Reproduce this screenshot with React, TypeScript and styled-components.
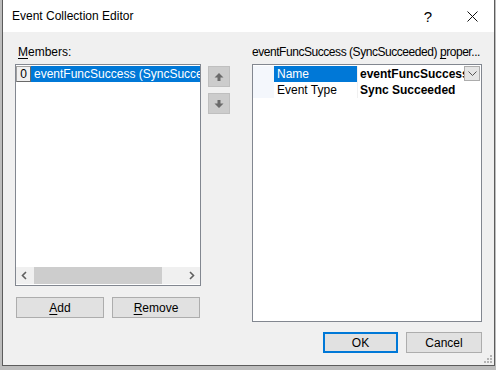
import React from "react";
import styled, { createGlobalStyle, css } from "styled-components";

const GlobalStyle = createGlobalStyle`
  html, body {
    margin: 0;
    padding: 0;
    background: #bdbdbd;
  }
  body {
    font-family: "Liberation Sans", Arial, sans-serif;
    font-size: 12px;
    color: #000;
  }
`;

const Screen = styled.div`
  width: 496px;
  height: 370px;
  overflow: hidden;
  background: #bdbdbd;
`;

const Window = styled.div`
  position: relative;
  margin-left: 2px;
  width: 491px;
  height: 365px;
  border: 1px solid #5c5c5c;
  border-top: none;
  display: flex;
  flex-direction: column;
  background: #f0f0f0;
`;

const TitleBar = styled.div`
  height: 32px;
  background: #ffffff;
  display: flex;
  align-items: center;
  padding-left: 9px;
`;

const Title = styled.span`
  flex: 1;
  font-size: 12px;
`;

const TitleButton = styled.div`
  width: 44px;
  height: 32px;
  display: flex;
  align-items: center;
  justify-content: center;
  font-size: 15px;
`;

const Body = styled.div`
  flex: 1;
  display: flex;
  gap: 22px;
  padding-left: 12px;
`;

const Pane = styled.div<{ $width: number }>`
  width: ${(p) => p.$width}px;
  display: flex;
  flex-direction: column;
`;

const Label = styled.div<{ $indent?: number; $tight?: boolean }>`
  height: 32px;
  box-sizing: border-box;
  padding-top: 13px;
  padding-left: ${(p) => p.$indent ?? 0}px;
  white-space: nowrap;
  letter-spacing: ${(p) => (p.$tight ? "-0.45px" : "normal")};
`;

const Mnemonic = styled.span`
  text-decoration: underline;
  text-underline-offset: 2px;
`;

const ListRow = styled.div`
  display: flex;
  gap: 7px;
`;

const ListBox = styled.div`
  position: relative;
  width: 186px;
  height: 222px;
  box-sizing: border-box;
  border: 1px solid #828790;
  background: #ffffff;
  display: flex;
  flex-direction: column;
`;

const ListItems = styled.div`
  flex: 1;
  padding-top: 1px;
`;

const ListItem = styled.div`
  display: flex;
  height: 16px;
`;

const IndexBox = styled.div`
  width: 15px;
  box-sizing: border-box;
  border: 1px solid #a0a0a0;
  border-right-color: #696969;
  border-bottom-color: #696969;
  background: #f0f0f0;
  display: flex;
  align-items: center;
  justify-content: center;
  font-size: 12px;
  line-height: 1;
`;

const ItemText = styled.div<{ $selected?: boolean }>`
  flex: 1;
  overflow: hidden;
  white-space: nowrap;
  padding-left: 3px;
  line-height: 16px;
  ${(p) =>
    p.$selected &&
    css`
      background: #0078d7;
      color: #ffffff;
    `}
`;

const HScroll = styled.div`
  height: 17px;
  margin-bottom: 1px;
  display: flex;
  background: #f0f0f0;
`;

const ScrollArrow = styled.div`
  width: 17px;
  display: flex;
  align-items: center;
  justify-content: center;
`;

const ScrollTrack = styled.div`
  flex: 1;
  padding: 0 1px;
  display: flex;
`;

const ScrollThumb = styled.div`
  width: 128px;
  background: #cdcdcd;
`;

const MoveButtons = styled.div`
  display: flex;
  flex-direction: column;
  gap: 6px;
  padding-top: 2px;
`;

const MoveButton = styled.div`
  width: 22px;
  height: 21px;
  box-sizing: border-box;
  background: #cccccc;
  border: 1px solid #bfbfbf;
  display: flex;
  align-items: center;
  justify-content: center;
`;

const ButtonRow = styled.div<{ $end?: boolean; $top: number; $left?: number }>`
  display: flex;
  gap: 8px;
  margin-top: ${(p) => p.$top}px;
  padding-left: ${(p) => p.$left ?? 0}px;
  justify-content: ${(p) => (p.$end ? "flex-end" : "flex-start")};
`;

const PushButton = styled.div<{ $width: number; $default?: boolean }>`
  width: ${(p) => p.$width}px;
  height: 21px;
  box-sizing: border-box;
  background: #e1e1e1;
  border: 1px solid #adadad;
  display: flex;
  align-items: center;
  justify-content: center;
  ${(p) =>
    p.$default &&
    css`
      border: 2px solid #0078d7;
    `}
`;

const Grid = styled.div`
  width: 230px;
  height: 258px;
  box-sizing: border-box;
  border: 1px solid #828790;
  background: #ffffff;
  padding-top: 1px;
`;

const GridRow = styled.div`
  display: flex;
  height: 16px;
`;

const Gutter = styled.div`
  width: 21px;
  background: #f4f7fc;
`;

const NameCell = styled.div<{ $selected?: boolean }>`
  width: 84px;
  padding-left: 3px;
  box-sizing: border-box;
  line-height: 16px;
  white-space: nowrap;
  border-right: 1px solid #f0f0f0;
  ${(p) =>
    p.$selected &&
    css`
      background: #0078d7;
      color: #ffffff;
    `}
`;

const ValueCell = styled.div`
  flex: 1;
  display: flex;
  min-width: 0;
  padding-left: 2px;
  font-weight: bold;
  line-height: 16px;
`;

const ValueText = styled.span`
  flex: 1;
  overflow: hidden;
  white-space: nowrap;
`;

const DropButton = styled.div`
  width: 16px;
  height: 15px;
  box-sizing: border-box;
  margin-right: 1px;
  background: #e5e5e5;
  border: 1px solid #acacac;
  display: flex;
  align-items: center;
  justify-content: center;
`;

const Grip = styled.svg`
  position: absolute;
  right: 2px;
  bottom: 2px;
`;

const ArrowUp = () => (
  <svg width="10" height="10" viewBox="0 0 10 10">
    <path d="M5 1 L9.5 5.5 H6.5 V9 H3.5 V5.5 H0.5 Z" fill="#6b6b6b" />
  </svg>
);

const ArrowDown = () => (
  <svg width="10" height="10" viewBox="0 0 10 10">
    <path d="M5 9 L9.5 4.5 H6.5 V1 H3.5 V4.5 H0.5 Z" fill="#6b6b6b" />
  </svg>
);

const Chevron = ({ dir }: { dir: "left" | "right" }) => (
  <svg width="7" height="9" viewBox="0 0 7 9">
    <polyline
      points={dir === "left" ? "5,1 1.5,4.5 5,8" : "2,1 5.5,4.5 2,8"}
      fill="none"
      stroke="#606060"
      strokeWidth="1.6"
    />
  </svg>
);

export default function App() {
  return (
    <>
      <GlobalStyle />
      <Screen>
        <Window>
          <TitleBar>
            <Title>Event Collection Editor</Title>
            <TitleButton>?</TitleButton>
            <TitleButton>
              <svg width="11" height="11" viewBox="0 0 11 11">
                <path d="M0.5 0.5 L10.5 10.5 M10.5 0.5 L0.5 10.5" stroke="#111" strokeWidth="1" />
              </svg>
            </TitleButton>
          </TitleBar>
          <Body>
            <Pane $width={215}>
              <Label $indent={3}>
                <Mnemonic>M</Mnemonic>embers:
              </Label>
              <ListRow>
                <ListBox>
                  <ListItems>
                    <ListItem>
                      <IndexBox>0</IndexBox>
                      <ItemText $selected>eventFuncSuccess (SyncSucceeded)</ItemText>
                    </ListItem>
                  </ListItems>
                  <HScroll>
                    <ScrollArrow>
                      <Chevron dir="left" />
                    </ScrollArrow>
                    <ScrollTrack>
                      <ScrollThumb />
                    </ScrollTrack>
                    <ScrollArrow>
                      <Chevron dir="right" />
                    </ScrollArrow>
                  </HScroll>
                </ListBox>
                <MoveButtons>
                  <MoveButton>
                    <ArrowUp />
                  </MoveButton>
                  <MoveButton>
                    <ArrowDown />
                  </MoveButton>
                </MoveButtons>
              </ListRow>
              <ButtonRow $top={11} $left={1}>
                <PushButton $width={88}>
                  <Mnemonic>A</Mnemonic>dd
                </PushButton>
                <PushButton $width={88}>
                  <Mnemonic>R</Mnemonic>emove
                </PushButton>
              </ButtonRow>
            </Pane>
            <Pane $width={230}>
              <Label $tight>
                eventFuncSuccess (SyncSucceeded) <Mnemonic>p</Mnemonic>roper...
              </Label>
              <Grid>
                <GridRow>
                  <Gutter />
                  <NameCell $selected>Name</NameCell>
                  <ValueCell>
                    <ValueText>eventFuncSuccess</ValueText>
                    <DropButton>
                      <svg width="9" height="5" viewBox="0 0 9 5">
                        <polyline points="0.5,0.5 4.5,4.5 8.5,0.5" fill="none" stroke="#555" strokeWidth="1" />
                      </svg>
                    </DropButton>
                  </ValueCell>
                </GridRow>
                <GridRow>
                  <Gutter />
                  <NameCell>Event Type</NameCell>
                  <ValueCell>
                    <ValueText>Sync Succeeded</ValueText>
                  </ValueCell>
                </GridRow>
              </Grid>
              <ButtonRow $end $top={10}>
                <PushButton $width={75} $default>
                  OK
                </PushButton>
                <PushButton $width={76}>Cancel</PushButton>
              </ButtonRow>
            </Pane>
          </Body>
          <Grip width="8" height="8" viewBox="0 0 8 8">
            <rect x="6" y="0" width="2" height="2" fill="#b4b4b4" />
            <rect x="3" y="3" width="2" height="2" fill="#b4b4b4" />
            <rect x="6" y="3" width="2" height="2" fill="#b4b4b4" />
            <rect x="0" y="6" width="2" height="2" fill="#b4b4b4" />
            <rect x="3" y="6" width="2" height="2" fill="#b4b4b4" />
            <rect x="6" y="6" width="2" height="2" fill="#b4b4b4" />
          </Grip>
        </Window>
      </Screen>
    </>
  );
}
